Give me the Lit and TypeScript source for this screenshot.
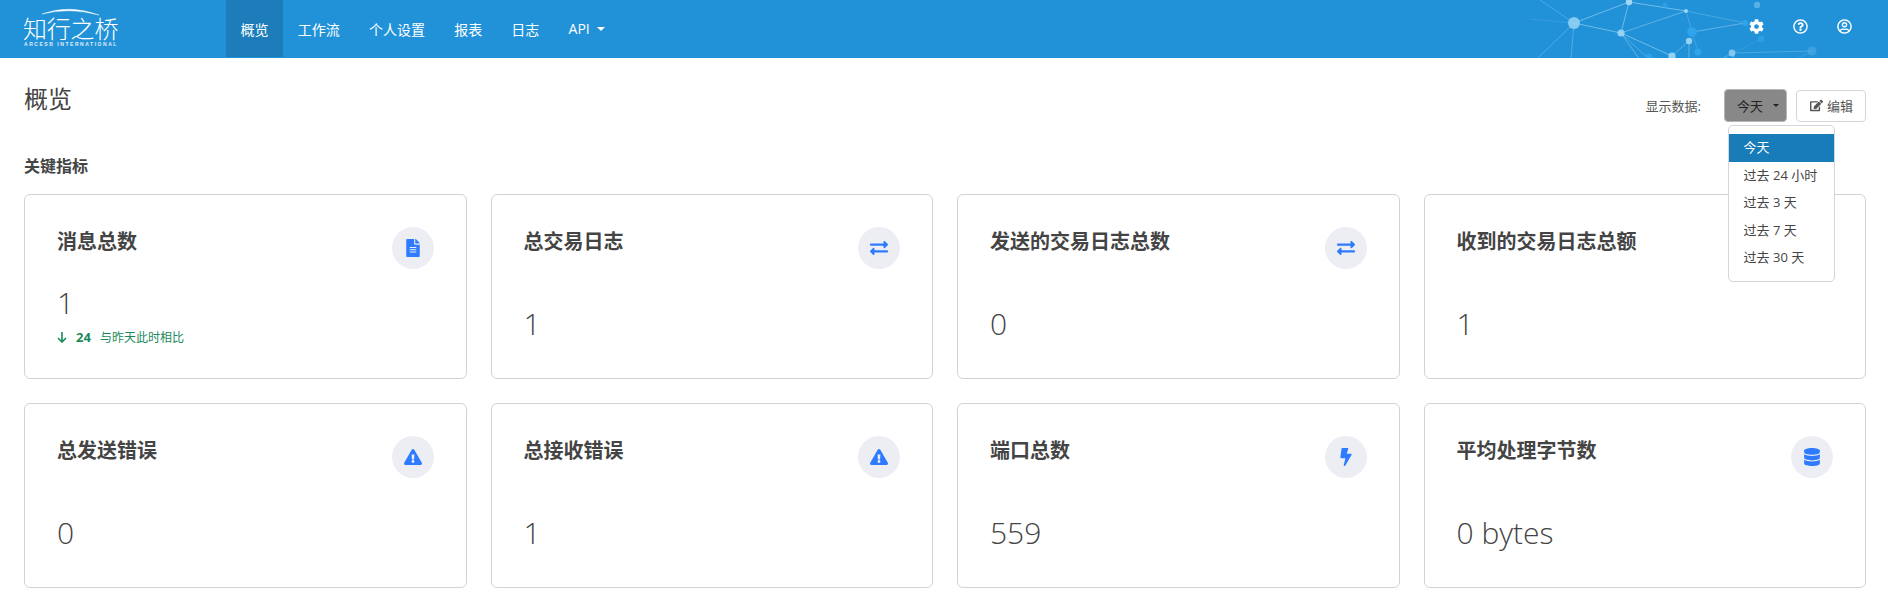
import { LitElement, html, css, svg } from "lit";
import { customElement } from "lit/decorators.js";

const I = {
  file: ["0 0 384 512", "M224 136V0H24C10.7 0 0 10.7 0 24v464c0 13.3 10.7 24 24 24h336c13.3 0 24-10.7 24-24V160H248c-13.2 0-24-10.8-24-24zm64 236c0 6.6-5.4 12-12 12H108c-6.6 0-12-5.4-12-12v-8c0-6.6 5.4-12 12-12h168c6.6 0 12 5.4 12 12v8zm0-64c0 6.6-5.4 12-12 12H108c-6.6 0-12-5.4-12-12v-8c0-6.6 5.4-12 12-12h168c6.6 0 12 5.4 12 12v8zm0-72v8c0 6.6-5.4 12-12 12H108c-6.6 0-12-5.4-12-12v-8c0-6.6 5.4-12 12-12h168c6.6 0 12 5.4 12 12zm96-114.1v6.1H256V0h6.1c6.4 0 12.5 2.5 17 7l97.9 98c4.5 4.5 7 10.6 7 16.9z"],
  exchange: ["0 0 512 512", "M0 168v-16c0-13.255 10.745-24 24-24h360V80c0-21.367 25.899-32.042 40.971-16.971l80 80c9.372 9.373 9.372 24.569 0 33.941l-80 80C409.956 271.982 384 261.456 384 240v-48H24c-13.255 0-24-10.745-24-24zm488 152H128v-48c0-21.314-25.862-32.08-40.971-16.971l-80 80c-9.372 9.373-9.372 24.569 0 33.941l80 80C102.057 463.997 128 453.437 128 432v-48h360c13.255 0 24-10.745 24-24v-16c0-13.255-10.745-24-24-24z"],
  warn: ["0 0 576 512", "M569.517 440.013C587.975 472.007 564.806 512 527.94 512H48.054c-36.937 0-59.999-40.055-41.577-71.987L246.423 23.985c18.467-32.009 64.72-31.951 83.154 0l239.94 416.028zM288 354c-25.405 0-46 20.595-46 46s20.595 46 46 46 46-20.595 46-46-20.595-46-46-46zm-43.673-165.346l7.418 136c.347 6.364 5.609 11.346 11.982 11.346h48.546c6.373 0 11.635-4.982 11.982-11.346l7.418-136c.375-6.874-5.098-12.654-11.982-12.654h-63.383c-6.884 0-12.356 5.78-11.981 12.654z"],
  bolt: ["0 0 320 512", "M296 160H180.6l42.6-129.8C227.2 15 215.7 0 200 0H56C44 0 33.8 8.9 32.2 20.8l-32 240C-1.7 275.2 9.5 288 24 288h118.7L96.6 482.5c-3.6 15.2 8 29.5 23.3 29.5 8.4 0 16.4-4.4 20.8-12l176-304c9.3-15.9-2.2-36-20.7-36z"],
  db: ["0 0 448 512", "M448 73.143v45.714C448 159.143 347.667 192 224 192S0 159.143 0 118.857V73.143C0 32.857 100.333 0 224 0s224 32.857 224 73.143zM448 176v102.857C448 319.143 347.667 352 224 352S0 319.143 0 278.857V176c48.125 33.143 136.208 48.572 224 48.572S399.874 209.143 448 176zm0 160v102.857C448 479.143 347.667 512 224 512S0 479.143 0 438.857V336c48.125 33.143 136.208 48.572 224 48.572S399.874 369.143 448 336z"],
  cog: ["0 0 512 512", "M487.4 315.7l-42.6-24.6c4.3-23.2 4.3-47 0-70.2l42.6-24.6c4.9-2.8 7.1-8.6 5.5-14-11.1-35.6-30-67.8-54.7-94.6-3.8-4.1-10-5.1-14.8-2.3L380.8 110c-17.9-15.4-38.5-27.3-60.8-35.1V25.8c0-5.6-3.9-10.5-9.4-11.7-36.7-8.2-74.3-7.8-109.2 0-5.5 1.2-9.4 6.1-9.4 11.7V75c-22.2 7.9-42.8 19.8-60.8 35.1L88.7 85.5c-4.9-2.8-11-1.9-14.8 2.3-24.7 26.7-43.6 58.9-54.7 94.6-1.7 5.4.6 11.2 5.5 14L67.3 221c-4.3 23.2-4.3 47 0 70.2l-42.6 24.6c-4.9 2.8-7.1 8.6-5.5 14 11.1 35.6 30 67.8 54.7 94.6 3.8 4.1 10 5.1 14.8 2.3l42.6-24.6c17.9 15.4 38.5 27.3 60.8 35.1v49.2c0 5.6 3.9 10.5 9.4 11.7 36.7 8.2 74.3 7.8 109.2 0 5.5-1.2 9.4-6.1 9.4-11.7v-49.2c22.2-7.9 42.8-19.8 60.8-35.1l42.6 24.6c4.9 2.8 11 1.9 14.8-2.3 24.7-26.7 43.6-58.9 54.7-94.6 1.5-5.5-.7-11.3-5.6-14.1zM256 336c-44.1 0-80-35.9-80-80s35.9-80 80-80 80 35.9 80 80-35.9 80-80 80z"],
  help: ["0 0 512 512", "M256 8C119.043 8 8 119.083 8 256c0 136.997 111.043 248 248 248s248-111.003 248-248C504 119.083 392.957 8 256 8zm0 448c-110.532 0-200-89.431-200-200 0-110.495 89.472-200 200-200 110.491 0 200 89.471 200 200 0 110.53-89.431 200-200 200zm107.244-255.2c0 67.052-72.421 68.084-72.421 92.863V300c0 6.627-5.373 12-12 12h-45.647c-6.627 0-12-5.373-12-12v-8.659c0-35.745 27.1-50.034 47.579-61.516 17.561-9.845 28.324-16.541 28.324-29.579 0-17.246-21.999-28.693-39.784-28.693-23.189 0-33.894 10.977-48.942 29.969-4.057 5.12-11.46 6.071-16.666 2.124l-27.824-21.098c-5.107-3.872-6.251-11.066-2.644-16.363C184.846 131.491 214.94 112 261.794 112c49.071 0 101.45 38.304 101.45 88.8zM298 368c0 23.159-18.841 42-42 42s-42-18.841-42-42 18.841-42 42-42 42 18.841 42 42z"],
  user: ["0 0 496 512", "M248 104c-53 0-96 43-96 96s43 96 96 96 96-43 96-96-43-96-96-96zm0 144c-26.5 0-48-21.5-48-48s21.5-48 48-48 48 21.5 48 48-21.5 48-48 48zm0-240C111 8 0 119 0 256s111 248 248 248 248-111 248-248S385 8 248 8zm0 448c-49.7 0-95.1-18.3-130.1-48.4 14.9-23 40.4-38.6 69.6-39.5 20.8 6.4 40.6 9.6 60.5 9.6s39.7-3.1 60.5-9.6c29.2 1 54.7 16.5 69.6 39.5-35 30.1-80.4 48.4-130.1 48.4zm162.7-84.1c-24.4-31.4-62.1-51.9-105.1-51.9-10.2 0-26 9.6-57.6 9.6-31.5 0-47.4-9.6-57.6-9.6-42.9 0-80.6 20.5-105.1 51.9C61.9 339.2 48 299.2 48 256c0-110.3 89.7-200 200-200s200 89.7 200 200c0 43.2-13.9 83.2-37.3 115.9z"],
  edit: ["0 0 576 512", "M402.6 83.2l90.2 90.2c3.8 3.8 3.8 10 0 13.8L274.4 405.6l-92.8 10.3c-12.4 1.4-22.9-9.1-21.5-21.5l10.3-92.8L388.8 83.2c3.8-3.8 10-3.8 13.8 0zm162-22.9l-48.8-48.8c-15.2-15.2-39.9-15.2-55.2 0l-35.4 35.4c-3.8 3.8-3.8 10 0 13.8l90.2 90.2c3.8 3.8 10 3.8 13.8 0l35.4-35.4c15.2-15.3 15.2-40 0-55.2zM384 346.2V448H64V128h229.8c3.2 0 6.2-1.3 8.5-3.5l40-40c7.6-7.6 2.2-20.5-8.5-20.5H48C21.5 64 0 85.5 0 112v352c0 26.5 21.5 48 48 48h352c26.5 0 48-21.5 48-48V306.2c0-10.7-12.9-16-20.5-8.5l-40 40c-2.2 2.3-3.5 5.3-3.5 8.5z"],
} as const;
type K = keyof typeof I;
const icon = (k: K, cls = "") => html`<svg class=${cls} viewBox=${I[k][0]} fill="currentColor"><path d=${I[k][1]}></path></svg>`;

// Network decoration, coordinates relative to x = 1400
const nodes: [number, number, number, string, number][] = [
  [174, 23, 6, "#8fd0f5", 0.9], [229, 2, 3.2, "#a5daf7", 0.95], [221, 33, 3.6, "#9ad5f6", 0.95],
  [286, 11, 2, "#a5daf7", 0.9], [265, 5, 2.5, "#2fa0e6", 0.9], [292, 32, 4.8, "#2ea4ea", 1],
  [289, 41, 3.2, "#9ad5f6", 0.95], [272, 56, 3.6, "#9ad5f6", 0.95], [298, 52, 3.5, "#2ea4ea", 1],
  [249, 57, 3.5, "#2ea4ea", 0.9], [345, 23, 3, "#2ea4ea", 1], [357, 5, 3.2, "#67b8e8", 0.8],
  [361, 39, 3.2, "#2ea4ea", 0.8], [332, 53, 3.4, "#8fd0f5", 0.85], [412, 51, 4.6, "#50aae3", 0.6],
];
const links: [number, number, number, number, number][] = [
  [174, 23, 229, 2, .5], [174, 23, 221, 33, .5], [229, 2, 221, 33, .5], [229, 2, 286, 11, .5],
  [221, 33, 286, 11, .4], [221, 33, 272, 56, .5], [221, 33, 240, 60, .4], [221, 33, 252, 62, .3],
  [286, 11, 345, 23, .25], [292, 32, 345, 23, .4], [286, 11, 292, 32, .25], [289, 41, 272, 56, .35],
  [289, 41, 289, 60, .4], [174, 23, 138, 58, .3], [174, 23, 171, 58, .3], [174, 23, 140, 0, .25],
  [174, 23, 130, 19, .12], [332, 53, 412, 51, .25], [332, 53, 320, 60, .3], [332, 53, 335, 60, .3],
  [361, 39, 320, 60, .1], [412, 51, 395, 60, .15], [292, 32, 298, 52, .2],
];
const decoration = svg`${links.map(([a, b, c, d, o]) => svg`<line x1=${a} y1=${b} x2=${c} y2=${d} stroke="#bfe4fb" stroke-width="1" opacity=${o}></line>`)}
${nodes.map(([x, y, r, f, o]) => svg`<circle cx=${x} cy=${y} r=${r} fill=${f} opacity=${o}></circle>`)}`;

const cards: { title: string; value: string; icon: K; sub?: boolean }[] = [
  { title: "消息总数", value: "1", icon: "file", sub: true },
  { title: "总交易日志", value: "1", icon: "exchange" },
  { title: "发送的交易日志总数", value: "0", icon: "exchange" },
  { title: "收到的交易日志总额", value: "1", icon: "exchange" },
  { title: "总发送错误", value: "0", icon: "warn" },
  { title: "总接收错误", value: "1", icon: "warn" },
  { title: "端口总数", value: "559", icon: "bolt" },
  { title: "平均处理字节数", value: "0 bytes", icon: "db" },
];
const navItems = ["概览", "工作流", "个人设置", "报表", "日志"];
const ranges = ["今天", "过去 24 小时", "过去 3 天", "过去 7 天", "过去 30 天"];

@customElement("app-root")
export class AppRoot extends LitElement {
  static styles = css`
    :host {
      display: block;
      height: 600px;
      overflow: hidden;
      background: #fff;
      color: #444;
      font-family: "Open Sans", "Noto Sans CJK SC", sans-serif;
    }
    .navbar {
      position: relative;
      display: flex;
      height: 58px;
      background: #2292d8;
      color: #fff;
      overflow: hidden;
    }
    .deco {
      position: absolute;
      left: 1400px;
      top: 0;
      width: 488px;
      height: 58px;
    }
    .brand {
      position: relative;
      width: 226px;
      flex: none;
      padding-left: 24px;
      box-sizing: border-box;
    }
    .arc {
      display: block;
      position: absolute;
      left: 41px;
      top: 6px;
      width: 60px;
      height: 10px;
    }
    .brand-cn {
      position: absolute;
      left: 23px;
      top: 14px;
      font-size: 24px;
      line-height: 28px;
      font-weight: 300;
      letter-spacing: -0.2px;
      white-space: nowrap;
      font-family: "Noto Sans CJK SC", sans-serif;
    }
    .brand-en {
      position: absolute;
      left: 24px;
      top: 41px;
      font-size: 5px;
      line-height: 6px;
      letter-spacing: 1.55px;
      font-weight: 700;
      white-space: nowrap;
      font-family: "Liberation Sans", sans-serif;
      opacity: 0.85;
    }
    .nav {
      display: flex;
      position: relative;
    }
    .nav a {
      display: flex;
      align-items: center;
      height: 57px;
      padding: 0 14.6px;
      font-size: 14px;
      color: #fff;
      white-space: nowrap;
    }
    .nav a.active {
      background: #1c7dba;
    }
    .caret {
      display: inline-block;
      margin-left: 7px;
      border-top: 4px solid #fff;
      border-left: 4px solid transparent;
      border-right: 4px solid transparent;
    }
    .tools {
      position: relative;
      margin-left: auto;
      display: flex;
      align-items: center;
      gap: 29px;
      padding-right: 36px;
      height: 52px;
    }
    .tools svg {
      display: block;
      width: 15px;
      height: 15px;
    }
    main {
      padding: 25px 22px 0 24px;
    }
    .head {
      display: flex;
      justify-content: space-between;
      align-items: flex-start;
      margin-bottom: 32px;
    }
    h1 {
      margin: 0;
      font-size: 24px;
      line-height: 32px;
      font-weight: 400;
      color: #444;
    }
    .controls {
      position: relative;
      display: flex;
      align-items: center;
      margin-top: 6px;
      font-size: 13px;
    }
    .label {
      margin-right: 23px;
      color: #555;
    }
    .select {
      display: flex;
      align-items: center;
      box-sizing: border-box;
      width: 63px;
      height: 33px;
      padding-left: 12px;
      background: #888;
      border: 1px solid #b4b6b8;
      border-radius: 4px;
      color: #222;
    }
    .select .caret {
      margin-left: 10px;
      border-top: 3px solid #222;
      border-left: 3px solid transparent;
      border-right: 3px solid transparent;
    }
    .edit {
      display: flex;
      align-items: center;
      gap: 4px;
      box-sizing: border-box;
      width: 70px;
      height: 32px;
      margin-left: 9px;
      padding-left: 13px;
      border: 1px solid #d3d6da;
      border-radius: 4px;
      color: #555;
    }
    .edit svg {
      width: 13px;
      height: 13px;
      margin-right: 0;
    }
    .menu {
      position: absolute;
      z-index: 5;
      left: 82px;
      top: 36px;
      width: 107px;
      box-sizing: border-box;
      padding: 8px 0 9px;
      background: #fff;
      border: 1px solid #d3d6da;
      border-radius: 5px;
      color: #444;
    }
    .menu div {
      height: 27.5px;
      line-height: 27.5px;
      padding-left: 15px;
      white-space: nowrap;
    }
    .menu div.on {
      background: #177cb8;
      color: #fff;
    }
    h2 {
      margin: 0 0 16px;
      font-size: 16px;
      line-height: 24px;
      font-weight: 700;
      color: #444;
    }
    .grid {
      display: grid;
      grid-template-columns: repeat(4, 1fr);
      grid-auto-rows: 185px;
      gap: 24px;
    }
    .card {
      display: flex;
      flex-direction: column;
      box-sizing: border-box;
      padding: 32px;
      border: 1px solid #d0d2d4;
      border-radius: 6px;
    }
    .top {
      display: flex;
      justify-content: space-between;
      align-items: flex-start;
    }
    .title {
      font-size: 20px;
      line-height: 30px;
      font-weight: 700;
      color: #444;
    }
    .badge {
      display: flex;
      align-items: center;
      justify-content: center;
      width: 42px;
      height: 42px;
      border-radius: 50%;
      background: #eceef3;
      color: #2f7bff;
    }
    .badge svg {
      height: 18px;
      width: 18px;
    }
    .bottom {
      margin-top: auto;
    }
    .value {
      font-size: 30px;
      line-height: 44px;
      font-weight: 300;
      color: #444;
    }
    .sub {
      display: flex;
      align-items: center;
      margin-top: 3px;
      height: 18px;
      font-size: 12px;
      color: #1b8a5a;
    }
    .sub svg {
      width: 10px;
      height: 12px;
      margin-right: 9px;
    }
    .sub b {
      margin-right: 9px;
      font-size: 13px;
    }
  `;

  render() {
    return html`
      <header class="navbar">
        <svg class="deco" viewBox="0 0 488 58">${decoration}</svg>
        <div class="brand">
          <svg class="arc" viewBox="0 0 60 10"><path d="M1 8 Q 28 -2 58 9 Q 28 1 1 8Z" fill="#fff" stroke="#fff" stroke-width=".4"></path></svg>
          <span class="brand-cn">知行之桥</span>
          <span class="brand-en">ARCESB INTERNATIONAL</span>
        </div>
        <nav class="nav">
          ${navItems.map((n, i) => html`<a class=${i === 0 ? "active" : ""}>${n}</a>`)}
          <a>API<span class="caret"></span></a>
        </nav>
        <div class="tools">${icon("cog")}${icon("help")}${icon("user")}</div>
      </header>
      <main>
        <div class="head">
          <h1>概览</h1>
          <div class="controls">
            <span class="label">显示数据:</span>
            <div class="select">今天<span class="caret"></span></div>
            <div class="edit">${icon("edit")}编辑</div>
            <div class="menu">
              ${ranges.map((r, i) => html`<div class=${i === 0 ? "on" : ""}>${r}</div>`)}
            </div>
          </div>
        </div>
        <h2>关键指标</h2>
        <section class="grid">
          ${cards.map(c => html`
            <article class="card">
              <div class="top">
                <div class="title">${c.title}</div>
                <div class="badge">${icon(c.icon)}</div>
              </div>
              <div class="bottom">
                <div class="value">${c.value}</div>
                ${c.sub ? html`<div class="sub">
                  <svg viewBox="0 0 10 12" fill="none" stroke="currentColor" stroke-width="1.6"><path d="M5 1v10M1 7l4 4 4-4"></path></svg>
                  <b>24</b>与昨天此时相比
                </div>` : ""}
              </div>
            </article>`)}
        </section>
      </main>
    `;
  }
}
